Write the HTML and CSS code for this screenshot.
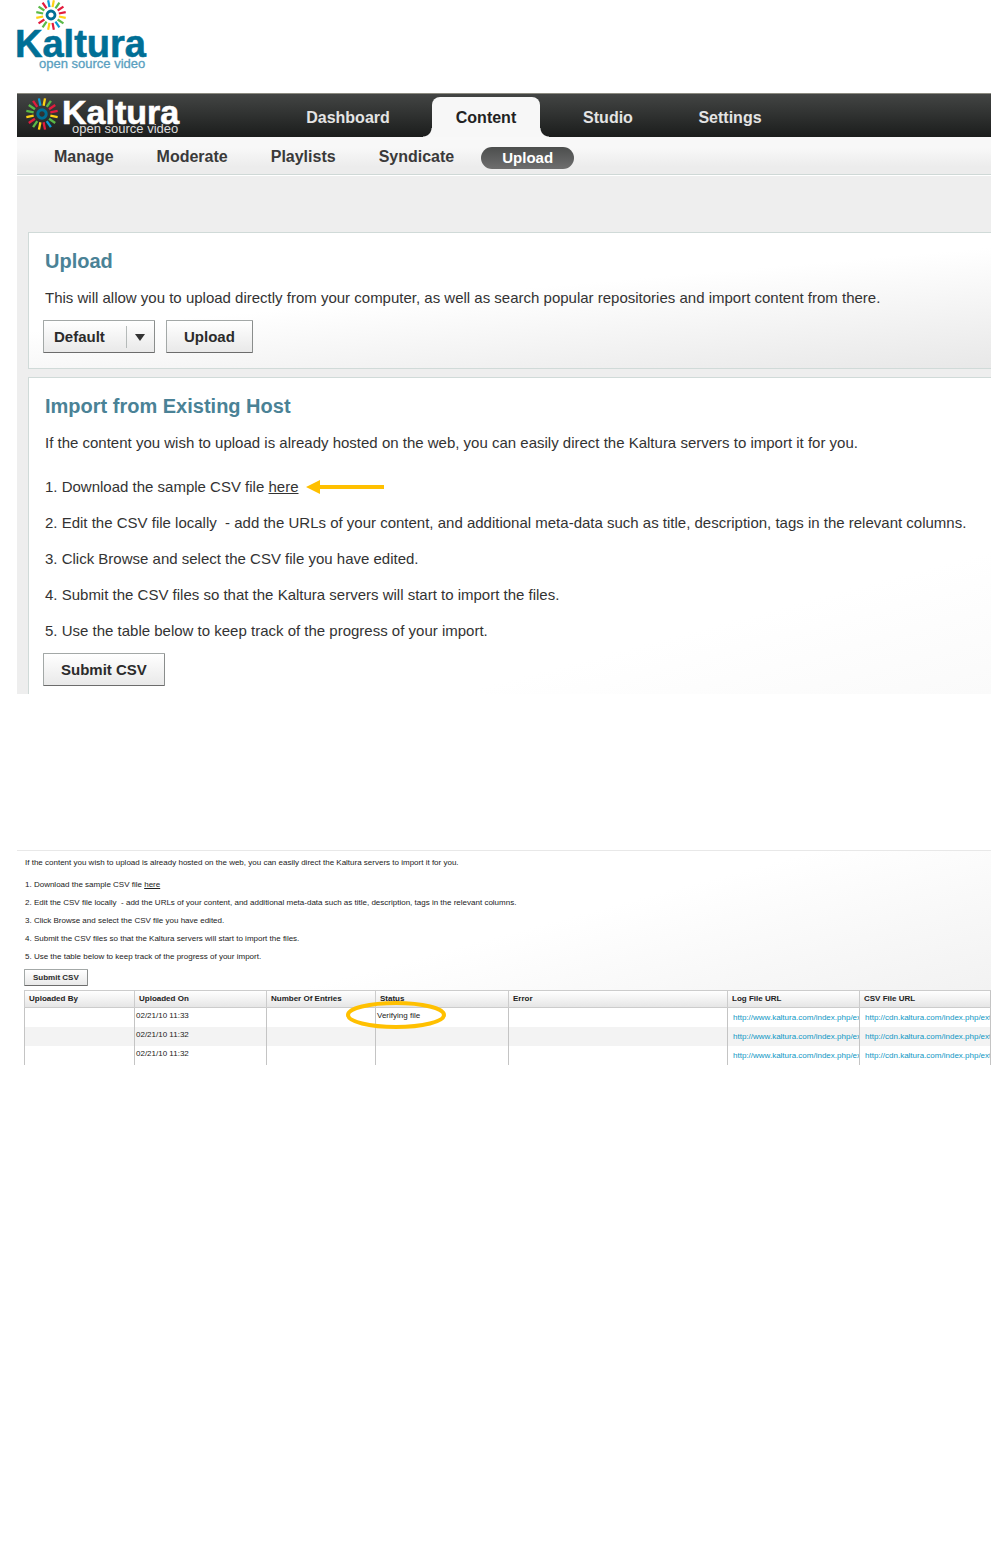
FILE: index.html
```html
<!DOCTYPE html>
<html lang="en">
<head>
  <meta charset="UTF-8">
  <meta name="viewport" content="width=device-width, initial-scale=1.0">
  <title>Kaltura - Upload</title>
  <link rel="stylesheet" href="styles.css">
</head>
<body>
  <!-- shared starburst mark -->
  <svg class="defs" width="0" height="0" aria-hidden="true">
    <defs>
      <symbol id="burst" viewBox="-16 -16 32 32">
        <circle r="4" fill="none" stroke="#006f95" stroke-width="2.8"/>
        <g stroke-width="2.2">
          <g stroke="#ffd215">
            <path d="M0-8V-15" transform="rotate(11)"/>
            <path d="M0-8V-15" transform="rotate(101)"/>
            <path d="M0-8V-15" transform="rotate(191)"/>
            <path d="M0-8V-15" transform="rotate(259)"/>
          </g>
          <g stroke="#e31b3d">
            <path d="M0-8V-15" transform="rotate(79)"/>
            <path d="M0-8V-15" transform="rotate(169)"/>
            <path d="M0-8V-15" transform="rotate(236)"/>
            <path d="M0-8V-15" transform="rotate(326)"/>
          </g>
          <g stroke="#5bb947">
            <path d="M0-8V-15" transform="rotate(34)"/>
            <path d="M0-8V-15" transform="rotate(124)"/>
            <path d="M0-8V-15" transform="rotate(214)"/>
            <path d="M0-8V-15" transform="rotate(281)"/>
            <path d="M0-8V-15" transform="rotate(304)"/>
          </g>
          <path d="M0-8V-15" transform="rotate(349)" stroke="#0a9bd8"/>
          <path d="M0-8V-15" transform="rotate(56)" stroke="#e31b3d"/>
          <path d="M0-8V-15" transform="rotate(146)" stroke="#0a9bd8"/>
        </g>
      </symbol>
    </defs>
  </svg>

  <header class="page-header">
    <svg class="brand" width="140" height="75" viewBox="0 0 140 75" role="img" aria-label="Kaltura open source video">
      <use href="#burst" x="18" y="-1" width="32" height="32"/>
      <text class="brand-name" x="-2" y="57">Kaltura</text>
      <text class="brand-tag" x="22" y="68">open source video</text>
    </svg>
  </header>

  <main>
    <section class="screen">
      <nav class="topbar">
        <svg class="topbar-logo" width="170" height="43" viewBox="0 0 170 43" role="img" aria-label="Kaltura open source video">
          <use href="#burst" x="8" y="3" width="34" height="34"/>
          <text class="bar-name" x="45" y="30">Kaltura</text>
          <text class="bar-tag" x="55" y="39">open source video</text>
        </svg>
        <div class="tabs">
          <a href="#">Dashboard</a>
          <a href="#" class="active">Content</a>
          <a href="#">Studio</a>
          <a href="#">Settings</a>
        </div>
      </nav>
      <nav class="subnav">
        <a href="#">Manage</a>
        <a href="#">Moderate</a>
        <a href="#">Playlists</a>
        <a href="#">Syndicate</a>
        <a href="#" class="pill">Upload</a>
      </nav>

      <div class="content">
        <div class="panel panel-upload">
          <h2>Upload</h2>
          <p>This will allow you to upload directly from your computer, as well as search popular repositories and import content from there.</p>
          <div class="controls">
            <div class="select-box">
              <select aria-label="Upload profile">
                <option>Default</option>
              </select>
              <svg class="select-arrow" width="20" height="22" viewBox="0 0 20 22" aria-hidden="true">
                <path d="M.5 0V22" stroke="#b5bab9"/>
                <path d="M9 8H19L14 15Z" fill="#333"/>
              </svg>
            </div>
            <button type="button" class="btn">Upload</button>
          </div>
        </div>

        <div class="panel panel-import">
          <h2>Import from Existing Host</h2>
          <p>If the content you wish to upload is already hosted on the web, you can easily direct the Kaltura servers to import it for you.</p>
          <ol class="steps">
            <li>Download the sample CSV file <a href="#">here</a>
              <svg class="arrow" width="78" height="14" viewBox="0 0 78 14" aria-hidden="true">
                <path d="M0 7L14 0V5H78V9H14V14Z" fill="#ffc000"/>
              </svg>
            </li>
            <li>Edit the CSV file locally&nbsp; - add the URLs of your content, and additional meta-data such as title, description, tags in the relevant columns.</li>
            <li>Click Browse and select the CSV file you have edited.</li>
            <li>Submit the CSV files so that the Kaltura servers will start to import the files.</li>
            <li>Use the table below to keep track of the progress of your import.</li>
          </ol>
          <div class="controls">
            <button type="button" class="btn">Submit CSV</button>
          </div>
        </div>
      </div>
    </section>

    <section class="screen screen-small">
      <p>If the content you wish to upload is already hosted on the web, you can easily direct the Kaltura servers to import it for you.</p>
      <ol class="steps">
        <li>Download the sample CSV file <a href="#">here</a></li>
        <li>Edit the CSV file locally&nbsp; - add the URLs of your content, and additional meta-data such as title, description, tags in the relevant columns.</li>
        <li>Click Browse and select the CSV file you have edited.</li>
        <li>Submit the CSV files so that the Kaltura servers will start to import the files.</li>
        <li>Use the table below to keep track of the progress of your import.</li>
      </ol>
      <button type="button" class="btn">Submit CSV</button>
      <table class="imports">
        <colgroup>
          <col class="col-by">
          <col class="col-on">
          <col class="col-entries">
          <col class="col-status">
          <col class="col-error">
          <col class="col-url">
          <col class="col-url">
        </colgroup>
        <thead>
          <tr>
            <th>Uploaded By</th>
            <th>Uploaded On</th>
            <th>Number Of Entries</th>
            <th>Status</th>
            <th>Error</th>
            <th>Log File URL</th>
            <th>CSV File URL</th>
          </tr>
        </thead>
        <tbody>
          <tr>
            <td></td>
            <td>02/21/10 11:33</td>
            <td></td>
            <td class="marked">Verifying file
              <svg class="ring" width="102" height="28" viewBox="0 0 102 28" aria-hidden="true">
                <ellipse cx="51" cy="14" rx="48" ry="12" fill="none" stroke="#ffc000" stroke-width="4"/>
              </svg>
            </td>
            <td></td>
            <td class="url"><a href="#">http://www.kaltura.com/index.php/ex</a></td>
            <td class="url"><a href="#">http://cdn.kaltura.com/index.php/extw</a></td>
          </tr>
          <tr>
            <td></td>
            <td>02/21/10 11:32</td>
            <td></td>
            <td></td>
            <td></td>
            <td class="url"><a href="#">http://www.kaltura.com/index.php/ex</a></td>
            <td class="url"><a href="#">http://cdn.kaltura.com/index.php/extw</a></td>
          </tr>
          <tr>
            <td></td>
            <td>02/21/10 11:32</td>
            <td></td>
            <td></td>
            <td></td>
            <td class="url"><a href="#">http://www.kaltura.com/index.php/ex</a></td>
            <td class="url"><a href="#">http://cdn.kaltura.com/index.php/extw</a></td>
          </tr>
        </tbody>
      </table>
    </section>
  </main>
</body>
</html>
```
FILE: styles.css
```css
* {
  box-sizing: border-box;
}

body {
  margin: 0;
  background: #fff;
  color: #333;
  font-family: "Liberation Sans", Arial, sans-serif;
  font-size: 15px;
  line-height: 20px;
}

h2, p, ol {
  margin: 0;
  padding: 0;
}

.defs {
  display: block;
}

/* Logo */
.page-header {
  height: 93px;
  padding-left: 17px;
}
.brand, .topbar-logo {
  display: block;
  flex: none;
  overflow: visible;
}
.brand-name, .bar-name {
  font-weight: bold;
}
.brand-name {
  font-size: 38px;
  fill: #006f95;
  stroke: #006f95;
  stroke-width: 0.6;
}
.brand-tag, .bar-tag {
  font-size: 13px;
}
.brand-tag {
  fill: #5a9fc0;
  stroke: #5a9fc0;
  stroke-width: 0.3;
}
.bar-name {
  font-size: 34px;
  fill: #fff;
  stroke: #fff;
  stroke-width: 0.6;
}
.bar-tag {
  fill: #ddd;
}

.screen {
  margin-left: 17px;
  overflow: hidden;
  background: #eee;
}

/* Navigation */
.topbar {
  display: flex;
  height: 44px;
  border-top: 1px solid #8b8a80;
  background: linear-gradient(#434544, #1b1d1c);
}
.tabs {
  display: flex;
  align-items: flex-end;
  gap: 14px;
  margin-left: 91px;
}
.tabs a {
  width: 108px;
  height: 40px;
  padding-top: 11px;
  color: #e4e4e4;
  font-size: 16px;
  font-weight: bold;
  text-align: center;
  text-decoration: none;
}
.tabs a:first-child {
  width: 140px;
}
.tabs .active {
  position: relative;
  border-radius: 8px 8px 0 0;
  background: #f7f7f7;
  color: #222;
}
/* flared feet of the open tab */
.tabs .active::before,
.tabs .active::after {
  content: "";
  position: absolute;
  bottom: 0;
  width: 9px;
  height: 9px;
}
.tabs .active::before {
  left: -9px;
  background: radial-gradient(circle at 0 0, transparent 8px, #f7f7f7 9px);
}
.tabs .active::after {
  right: -9px;
  background: radial-gradient(circle at 100% 0, transparent 8px, #f7f7f7 9px);
}

.subnav {
  display: flex;
  gap: 43px;
  height: 38px;
  padding: 10px 0 0 37px;
  border-bottom: 1px solid #cfd8d6;
  background: linear-gradient(#f8f8f8 30%, #ececec 80%);
}
.subnav a {
  color: #3a3a3a;
  font-size: 16px;
  font-weight: bold;
  text-decoration: none;
}
.subnav .pill {
  height: 22px;
  margin-left: -16px;
  padding: 0 21px;
  border-radius: 11px;
  background: linear-gradient(#4c4e4d, #6e6e6e);
  color: #fff;
  font-size: 15px;
  line-height: 22px;
}

/* Panels */
.content {
  display: flex;
  flex-direction: column;
  gap: 8px;
  padding: 56px 0 0 11px;
  border-top: 1px solid #fff;
}
.panel {
  padding: 16px 0 15px 16px;
  border: 1px solid #d0dad8;
  border-right: 0;
  white-space: nowrap;
}
.panel-upload {
  background: linear-gradient(175deg, #fff 45%, #e8e8e8);
}
.panel-import {
  padding-bottom: 8px;
  border-bottom: 0;
  background: linear-gradient(165deg, #fff 75%, #fafafa);
}
.panel h2 {
  margin-bottom: 15px;
  color: #4a8296;
  font-size: 20px;
  line-height: 24px;
}
.steps {
  display: flex;
  flex-direction: column;
  gap: 16px;
  margin-top: 24px;
  list-style-position: inside;
}
.steps a {
  color: inherit;
}
.arrow {
  margin-left: 3px;
  vertical-align: -2px;
}

.controls {
  display: flex;
  gap: 11px;
  margin: 12px 0 0 -2px;
}
.btn, .select-box select {
  height: 33px;
  border: 1px solid #a3a8a7;
  border-right-color: #8a8d8c;
  border-bottom-color: #6c6c6c;
  border-radius: 1px;
  background: linear-gradient(#fff, #e9e9e9);
  color: #2b2b2b;
  font: bold 15px "Liberation Sans", Arial, sans-serif;
}
.btn {
  padding: 0 17px;
}
.select-box {
  position: relative;
}
.select-box select {
  width: 112px;
  padding: 0 10px;
  appearance: none;
}
.select-arrow {
  position: absolute;
  top: 6px;
  right: 9px;
  pointer-events: none;
}

/* Reduced view of the import list */
.screen-small {
  margin-top: 156px;
  padding: 7px 0 0 7px;
  border-top: 1px solid #e8e8e8;
  background: linear-gradient(165deg, #fff 45%, #f0f0f0 90%);
  color: #222;
  font-size: 8px;
  line-height: 10px;
  white-space: nowrap;
}
.screen-small p {
  padding-left: 1px;
}
.screen-small .steps {
  gap: 8px;
  margin-top: 12px;
  padding-left: 1px;
}
.screen-small .btn {
  display: block;
  height: 17px;
  margin: 7px 0 4px;
  padding: 0 8px;
  font-size: 8px;
}

.imports {
  width: 100%;
  table-layout: fixed;
  border-collapse: separate;
  border-spacing: 0;
}
.col-by { width: 110px; }
.col-on { width: 132px; }
.col-entries { width: 109px; }
.col-status { width: 133px; }
.col-url { width: 132px; }

.imports th {
  height: 18px;
  padding: 0 4px;
  border: 1px solid #ccc;
  border-width: 1px 0 1px 1px;
  background: linear-gradient(#fff, #e6e6e6);
  text-align: left;
}
.imports td {
  height: 19px;
  padding: 3px 1px;
  border-left: 1px solid #c4c4c4;
  background: #fff;
  vertical-align: top;
  overflow: hidden;
}
.imports tr > :last-child {
  border-right: 1px solid #c4c4c4;
}
.imports tr:nth-child(even) td {
  background: #f3f3f3;
}
.imports .url {
  padding: 5px 0 0 5px;
}
.url a {
  color: #0f97c4;
  text-decoration: none;
}
.imports .marked {
  position: relative;
  overflow: visible;
}
.ring {
  position: absolute;
  top: -7px;
  left: -31px;
}
```
